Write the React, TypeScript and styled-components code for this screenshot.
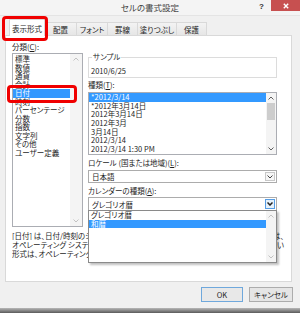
import React from 'react';
import styled, { createGlobalStyle } from 'styled-components';

const GlobalStyle = createGlobalStyle`
  html, body { margin: 0; padding: 0; background: #f0f0f0; }
  body {
    font-family: "Noto Sans CJK JP", "Noto Sans", sans-serif;
    font-feature-settings: "palt";
    color: #1e1e1e;
  }
  * { box-sizing: border-box; }
`;

const Window = styled.div`
  position: relative;
  width: 300px;
  height: 313px;
  display: flex;
  flex-direction: column;
  background: #f0f0f0;
  overflow: hidden;
`;

const TitleBar = styled.div`
  height: 16px;
  flex: none;
  display: grid;
  grid-template-columns: 1fr auto 1fr;
  background: #f4f4f4;
  border-bottom: 1px solid #e4e4e4;
`;

const Title = styled.div`
  grid-column: 2;
  font-size: 8.5px;
  line-height: 14px;
  color: #444;
`;

const Controls = styled.div`
  grid-column: 3;
  justify-self: end;
  display: flex;
  align-items: flex-start;
`;

const Help = styled.div`
  font-family: "Liberation Sans", Arial, sans-serif;
  font-weight: bold;
  font-size: 8px;
  line-height: 9px;
  margin-top: 2px;
  margin-right: 7px;
  color: #333;
`;

const CloseBtn = styled.div`
  width: 29px;
  height: 11px;
  background: #c75050;
  display: flex;
  align-items: center;
  justify-content: center;
`;

const Client = styled.div`
  flex: 1;
  display: flex;
  flex-direction: column;
  padding: 0 8px 0 5px;
`;

const TabStrip = styled.div`
  height: 20px;
  flex: none;
  display: flex;
  align-items: flex-end;
  padding-left: 4px;
  margin-bottom: -1px;
  position: relative;
  z-index: 1;
`;

const Tab = styled.div<{ $w: number; $active?: boolean }>`
  width: ${p => p.$w}px;
  height: ${p => (p.$active ? 17 : 13)}px;
  margin-bottom: ${p => (p.$active ? 0 : 1)}px;
  margin-left: -1px;
  border: 1px solid #d9d9d9;
  border-bottom: none;
  background: ${p => (p.$active ? '#fff' : 'linear-gradient(#f3f3f3, #e6e6e6)')};
  font-size: 7.5px;
  display: flex;
  align-items: center;
  justify-content: center;
  &:first-child { margin-left: 0; }
`;

const Panel = styled.div`
  height: 247px;
  flex: none;
  background: #fff;
  border: 1px solid #d9d9d9;
  padding: 6px 14px 0 6px;
  font-size: 7.5px;
`;

const PanelGrid = styled.div`
  display: grid;
  grid-template-columns: 71px 189px;
  column-gap: 5px;
  align-items: start;
`;

const Col = styled.div<{ $top?: number }>`
  display: flex;
  flex-direction: column;
  padding-top: ${p => p.$top ?? 0}px;
`;

const Label = styled.div<{ $mt?: number; $mb?: number }>`
  line-height: 10px;
  height: 10px;
  margin-top: ${p => p.$mt ?? 0}px;
  margin-bottom: ${p => p.$mb ?? 0}px;
  white-space: nowrap;
  u { text-decoration-thickness: 0.5px; text-underline-offset: 1px; }
`;

const ListBox = styled.div<{ $h: number; $mt?: number }>`
  height: ${p => p.$h}px;
  margin-top: ${p => p.$mt ?? 0}px;
  border: 1px solid #abadb3;
  background: #fff;
  display: flex;
`;

const Items = styled.div<{ $pt?: number }>`
  flex: 1;
  min-width: 0;
  padding-top: ${p => p.$pt ?? 0}px;
  overflow: hidden;
`;

const Item = styled.div<{ $sel?: boolean; $h?: number }>`
  height: ${p => p.$h ?? 8.5}px;
  line-height: ${p => p.$h ?? 8.5}px;
  padding-left: 2px;
  white-space: nowrap;
  background: ${p => (p.$sel ? '#3399ff' : 'transparent')};
  color: ${p => (p.$sel ? '#fff' : '#1e1e1e')};
`;

const ScrollBar = styled.div<{ $w?: number }>`
  width: ${p => p.$w ?? 10}px;
  flex: none;
  display: flex;
  flex-direction: column;
  background: #f4f4f4;
`;

const ArrowBox = styled.div`
  height: 10px;
  flex: none;
  display: flex;
  align-items: center;
  justify-content: center;
`;

const Track = styled.div`
  flex: 1;
  display: flex;
  flex-direction: column;
`;

const Thumb = styled.div<{ $h: number }>`
  height: ${p => p.$h}px;
  margin: 0 1px;
  background: #cdcdcd;
`;

const SampleBox = styled.fieldset`
  margin: 0;
  min-width: 0;
  padding: 5px 2px 1px;
  border: 1px solid #dcdcdc;
  legend {
    padding: 0 1px;
    margin-left: 1px;
    line-height: 8px;
    font-size: 7.5px;
  }
`;

const SampleText = styled.div`
  line-height: 10px;
  height: 10px;
`;

const Combo = styled.div<{ $h: number; $mt?: number }>`
  height: ${p => p.$h}px;
  margin-top: ${p => p.$mt ?? 0}px;
  border: 1px solid #acacac;
  background: #fff;
  display: flex;
  position: relative;
`;

const ComboText = styled.div`
  flex: 1;
  padding-left: 3px;
  display: flex;
  align-items: center;
`;

const DropBtn = styled.div<{ $hot?: boolean }>`
  width: 10px;
  flex: none;
  margin: 1px;
  border: 1px solid ${p => (p.$hot ? '#569de5' : '#c8c8c8')};
  background: ${p => (p.$hot ? '#e5f1fb' : '#f6f6f6')};
  display: flex;
  align-items: center;
  justify-content: center;
`;

const DropList = styled.div`
  position: absolute;
  top: 100%;
  left: -1px;
  right: -1px;
  height: 53px;
  border: 1px solid #8a8a8a;
  background: #fff;
  display: flex;
  box-shadow: 2px 2px 2px rgba(0, 0, 0, 0.25);
  z-index: 2;
`;

const Description = styled.div`
  margin-top: 4px;
  width: 272px;
`;

const DescLine = styled.div`
  line-height: 9px;
  height: 9px;
  display: flex;
  white-space: nowrap;
`;

const DescMain = styled.span`
  flex: 1;
  min-width: 0;
  overflow: hidden;
`;

const DescTail = styled.span`
  flex: none;
`;

const ButtonRow = styled.div`
  height: 26px;
  flex: none;
  display: flex;
  justify-content: flex-end;
  align-items: flex-start;
  gap: 6px;
  padding-top: 5px;
  margin-right: -1px;
`;

const Button = styled.div<{ $w: number; $def?: boolean }>`
  width: ${p => p.$w}px;
  height: 15px;
  border: 1px solid ${p => (p.$def ? '#6fa8dc' : '#acacac')};
  background: ${p => (p.$def ? '#e8e8e8' : '#e5e5e5')};
  font-size: 7.5px;
  display: flex;
  align-items: center;
  justify-content: center;
`;

const FrameBottom = styled.div`
  height: 5px;
  flex: none;
  background: linear-gradient(#b8b8b8, #5a5a5a);
`;

const Highlight = styled.div<{ $x: number; $y: number; $w: number; $h: number }>`
  position: absolute;
  left: ${p => p.$x}px;
  top: ${p => p.$y}px;
  width: ${p => p.$w}px;
  height: ${p => p.$h}px;
  border: 3px solid #f00000;
  border-radius: 4px;
  z-index: 5;
  pointer-events: none;
`;

const Chevron = ({ up, color = '#a0a0a0', bold }: { up?: boolean; color?: string; bold?: boolean }) => (
  <svg width="6" height="4" viewBox="0 0 6 4">
    <polyline
      points={up ? '0.5,3.5 3,1 5.5,3.5' : '0.5,0.5 3,3 5.5,0.5'}
      fill="none"
      stroke={color}
      strokeWidth={bold ? 1.5 : 1}
    />
  </svg>
);

const Scroll = ({ thumb, w, color }: { thumb?: [number, number]; w?: number; color?: string }) => (
  <ScrollBar $w={w}>
    <ArrowBox><Chevron up color={color} /></ArrowBox>
    <Track>
      {thumb && (
        <>
          <div style={{ height: thumb[0] }} />
          <Thumb $h={thumb[1]} />
        </>
      )}
    </Track>
    <ArrowBox><Chevron color={color} /></ArrowBox>
  </ScrollBar>
);

const categories = ['標準', '数値', '通貨', '会計', '日付', '時刻', 'パーセンテージ', '分数', '指数', '文字列', 'その他', 'ユーザー定義'];
const types = ['*2012/3/14', '*2012年3月14日', '2012年3月14日', '2012年3月', '3月14日', '2012/3/14', '2012/3/14 1:30 PM'];
const tabs: [string, number][] = [['表示形式', 36], ['配置', 33], ['フォント', 32], ['罫線', 31], ['塗りつぶし', 40], ['保護', 31]];

export default function App() {
  return (
    <>
      <GlobalStyle />
      <Window>
        <TitleBar>
          <Title>セルの書式設定</Title>
          <Controls>
            <Help>?</Help>
            <CloseBtn>
              <svg width="6" height="6" viewBox="0 0 6 6">
                <path d="M0.8 0.8 L5.2 5.2 M5.2 0.8 L0.8 5.2" stroke="#fff" strokeWidth="1.4" />
              </svg>
            </CloseBtn>
          </Controls>
        </TitleBar>
        <Client>
          <TabStrip>
            {tabs.map(([t, w], i) => (
              <Tab key={t} $w={w} $active={i === 0}>{t}</Tab>
            ))}
          </TabStrip>
          <Panel>
            <PanelGrid>
              <Col>
                <Label $mb={1}>分類(<u>C</u>):</Label>
                <ListBox $h={174}>
                  <Items $pt={1}>
                    {categories.map(c => (
                      <Item key={c} $sel={c === '日付'}>{c}</Item>
                    ))}
                  </Items>
                  <Scroll w={12} color="#c2c2c2" />
                </ListBox>
              </Col>
              <Col $top={11}>
                <SampleBox>
                  <legend>サンプル</legend>
                  <SampleText>2010/6/25</SampleText>
                </SampleBox>
                <Label $mt={2}>種類(<u>T</u>):</Label>
                <ListBox $h={63} $mt={2}>
                  <Items>
                    {types.map((t, i) => (
                      <Item key={t + i} $h={8.7} $sel={i === 0}>{t}</Item>
                    ))}
                  </Items>
                  <Scroll thumb={[0, 17]} color="#606060" />
                </ListBox>
                <Label $mt={3}>ロケール (国または地域)(<u>L</u>):</Label>
                <Combo $h={13} $mt={2}>
                  <ComboText>日本語</ComboText>
                  <DropBtn><Chevron color="#444" /></DropBtn>
                </Combo>
                <Label $mt={3}>カレンダーの種類(<u>A</u>):</Label>
                <Combo $h={14} $mt={1}>
                  <ComboText>グレゴリオ暦</ComboText>
                  <DropBtn $hot><Chevron color="#222" bold /></DropBtn>
                  <DropList>
                    <Items>
                      <Item>グレゴリオ暦</Item>
                      <Item $sel>和暦</Item>
                    </Items>
                    <Scroll color="#c2c2c2" />
                  </DropList>
                </Combo>
              </Col>
            </PanelGrid>
            <Description>
              <DescLine>
                <DescMain>[日付] は、日付/時刻のシリアル値を日付形式で表示します。アスタリスク (*) で始まる日付形式</DescMain>
                <DescTail>は、</DescTail>
              </DescLine>
              <DescLine>
                <DescMain>オペレーティング システムで指定された地域の日付/時刻の設定に従います。アスタリスクのな</DescMain>
                <DescTail>い</DescTail>
              </DescLine>
              <DescLine>
                <DescMain>形式は、オペレーティング システムの設定に影響されません。</DescMain>
              </DescLine>
            </Description>
          </Panel>
          <ButtonRow>
            <Button $w={42} $def>OK</Button>
            <Button $w={44}>キャンセル</Button>
          </ButtonRow>
        </Client>
        <FrameBottom />
        <Highlight $x={2} $y={16} $w={46} $h={25} />
        <Highlight $x={7} $y={85} $w={70} $h={18} />
      </Window>
    </>
  );
}
